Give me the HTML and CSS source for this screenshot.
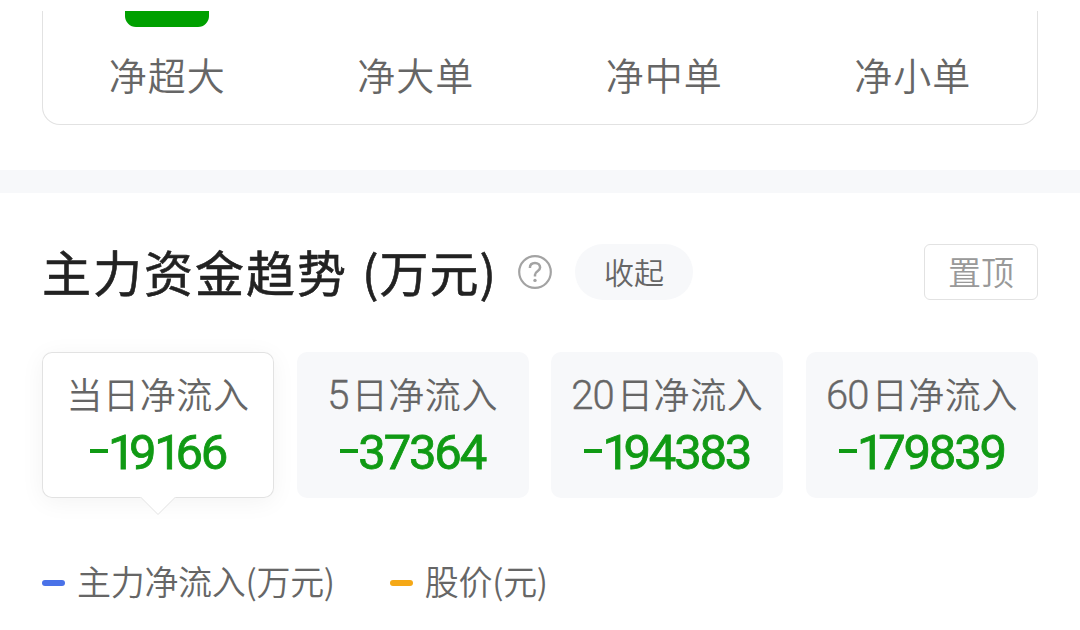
FILE: index.html
```html
<!doctype html>
<html lang="zh-CN">
  <head>
    <meta charset="UTF-8" />
    <meta name="viewport" content="width=device-width, initial-scale=1.0" />
    <title>主力资金趋势</title>
    <link rel="stylesheet" href="styles.css">
  </head>
  <body>
    <section class="orders">
      <div class="order">
        <div class="order-bar"></div>
        <span>净超大</span>
      </div>
      <div class="order"><span>净大单</span></div>
      <div class="order"><span>净中单</span></div>
      <div class="order"><span>净小单</span></div>
    </section>

    <div class="divider"></div>

    <section class="trend">
      <header class="trend-header">
        <h2>主力资金趋势<span class="unit">(万元)</span></h2>
        <svg class="help" width="36" height="36" viewBox="0 0 36 36" fill="none" stroke="#a3a3a3">
          <circle cx="18" cy="18" r="15.8" stroke-width="2.2" />
          <path d="M12.9 14C12.9 10.8 15 9 18 9C21 9 23.1 10.9 23.1 13.6C23.1 17.3 18 17.2 18 20.8V22.6" stroke-width="2.5" />
          <circle cx="18" cy="26.4" r="1.7" fill="#a3a3a3" stroke="none" />
        </svg>
        <button class="collapse">收起</button>
        <button class="pin">置顶</button>
      </header>

      <div class="tabs">
        <div class="tab active">
          <div class="tab-label">当日净流入</div>
          <div class="tab-value"><i class="minus"></i><span class="narrow">1</span>9<span class="narrow">1</span>66</div>
          <svg class="pointer" width="36" height="19" viewBox="0 0 36 19">
            <path d="M0 0H36L18 17.5Z" fill="#fff" />
            <path d="M0.5 0L18 17.5L35.5 0" fill="none" stroke="#e2e2e2" />
          </svg>
        </div>
        <div class="tab">
          <div class="tab-label"><span class="num">5</span>日净流入</div>
          <div class="tab-value"><i class="minus"></i>37364</div>
        </div>
        <div class="tab">
          <div class="tab-label"><span class="num">20</span>日净流入</div>
          <div class="tab-value"><i class="minus"></i><span class="narrow">1</span>94383</div>
        </div>
        <div class="tab">
          <div class="tab-label"><span class="num">60</span>日净流入</div>
          <div class="tab-value"><i class="minus"></i><span class="narrow">1</span>79839</div>
        </div>
      </div>

      <div class="legend">
        <div class="legend-item inflow">主力净流入(万元)</div>
        <div class="legend-item price">股价(元)</div>
      </div>
    </section>
  </body>
</html>
```
FILE: styles.css
```css
* {
  margin: 0;
  padding: 0;
  box-sizing: border-box;
}

body {
  width: 1080px;
  height: 630px;
  overflow: hidden;
  background: #fff;
  color: #666;
  font-family: "Noto Sans CJK SC", sans-serif;
  font-weight: 350;
}

.orders {
  display: flex;
  width: 996px;
  height: 114px;
  margin: 11px 42px 45px;
  border: 1px solid #e2e2e2;
  border-top: none;
  border-radius: 0 0 18px 18px;
}

.order {
  flex: 1;
  display: flex;
  flex-direction: column;
  align-items: center;
  justify-content: flex-end;
  padding-bottom: 30px;
  font-size: 38px;
  line-height: 40px;
  letter-spacing: 1px;
}

.order-bar {
  width: 84px;
  height: 16px;
  margin-bottom: auto;
  background: #00a000;
  border-radius: 0 0 11px 11px;
}

.divider {
  height: 23px;
  background: #f7f8fa;
}

.trend {
  padding: 51px 42px 0;
}

.trend-header {
  display: flex;
  align-items: center;
  height: 56px;
}

.trend-header h2 {
  width: 475px;
  padding-bottom: 3px;
  color: #222;
  font-size: 49px;
  line-height: 56px;
  font-weight: 400;
  letter-spacing: 2px;
  white-space: nowrap;
  -webkit-text-stroke: 0.6px #222;
}

.unit {
  margin-left: 14px;
  letter-spacing: 1px;
}

.help {
  flex: none;
}

.trend-header button {
  height: 56px;
  padding-bottom: 2px;
  font-family: inherit;
  font-weight: inherit;
  line-height: 51px;
}

.trend-header .collapse {
  width: 118px;
  margin-left: 22px;
  border: none;
  border-radius: 28px;
  background: #f7f8fa;
  color: #666;
  font-size: 30px;
}

.trend-header .pin {
  width: 114px;
  margin-left: auto;
  border: 1px solid #e2e2e2;
  border-radius: 6px;
  background: #fff;
  color: #999;
  font-size: 33px;
}

.tabs {
  display: flex;
  justify-content: space-between;
  margin-top: 52px;
}

.tab {
  position: relative;
  flex: none;
  width: 232px;
  height: 146px;
  padding-top: 18px;
  border-radius: 10px;
  background: #f7f8fa;
  text-align: center;
  white-space: nowrap;
}

.tab.active {
  background: #fff;
  box-shadow: inset 0 0 0 1px #e2e2e2, 0 4px 24px rgba(0, 0, 0, 0.05);
}

.tab-label {
  height: 46px;
  font-size: 36px;
  line-height: 46px;
  letter-spacing: 0.6px;
}

.num {
  margin-right: 3px;
  font-family: Roboto, sans-serif;
  font-weight: 300;
  font-size: 40px;
  line-height: 40px;
  letter-spacing: -0.8px;
  -webkit-text-stroke: 0.4px #666;
}

.tab-value {
  display: flex;
  align-items: center;
  justify-content: center;
  margin-top: 7px;
  color: #109a14;
  font-family: Roboto, sans-serif;
  font-size: 49px;
  line-height: 60px;
  font-weight: 400;
  letter-spacing: -2.2px;
  -webkit-text-stroke: 0.8px #109a14;
}

.narrow {
  letter-spacing: -6.5px;
}

.minus {
  width: 18px;
  height: 4px;
  margin: 0 0 5px;
  background: #109a14;
}

.pointer {
  position: absolute;
  left: 98px;
  top: 145px;
}

.legend {
  display: flex;
  gap: 55px;
  margin-top: 58px;
  font-size: 34px;
  line-height: 50px;
  letter-spacing: -0.3px;
}

.legend-item {
  display: flex;
  align-items: center;
}

.legend-item::before {
  content: "";
  width: 23px;
  height: 6px;
  margin: 3px 12px 0 0;
  border-radius: 3px;
  background: #4a72e8;
}

.legend-item.price::before {
  background: #f5a816;
}
```
